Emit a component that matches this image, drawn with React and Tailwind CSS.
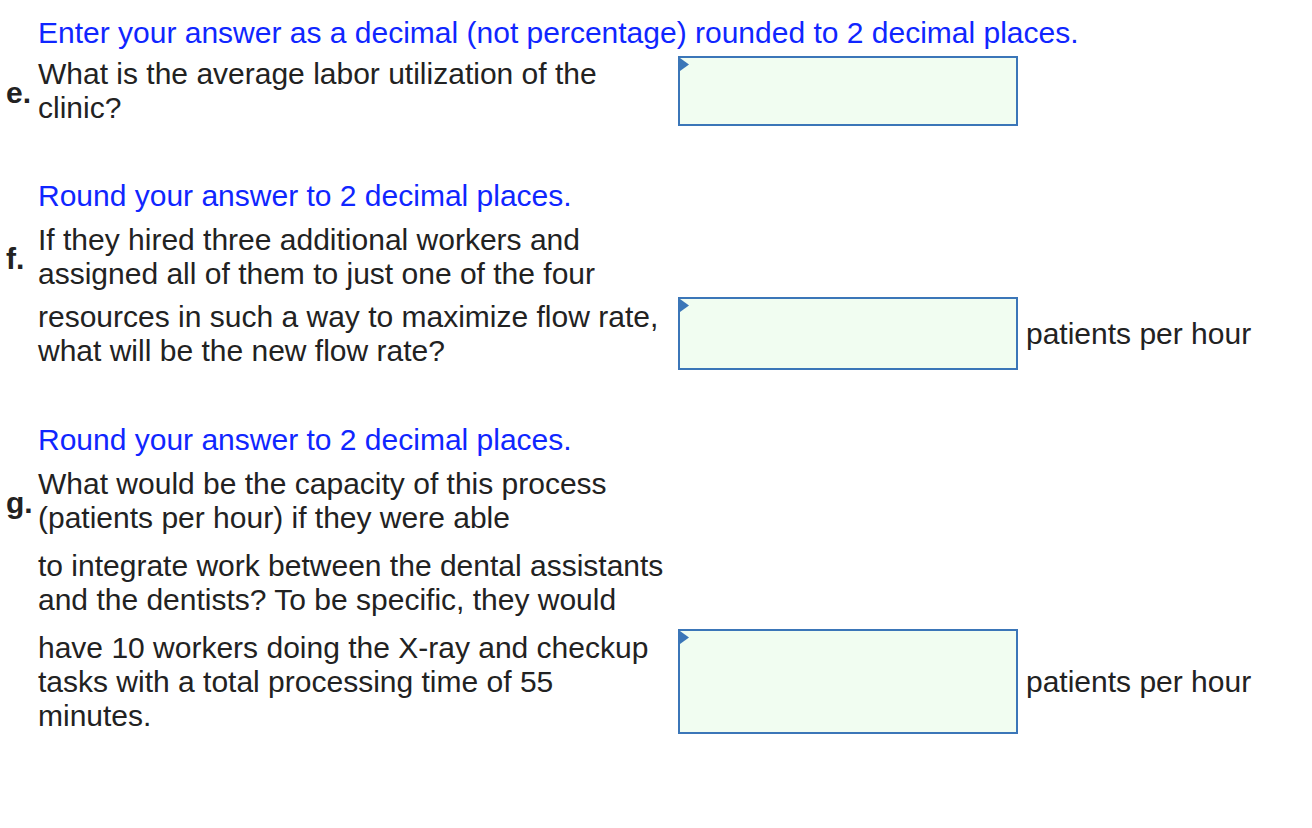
import React from "react";

const AnswerBox = ({ height }) => (
  <div
    className="relative w-[340px] shrink-0 border-2 border-[#3b76b8] bg-[#f1fdf1]"
    style={{ height }}
  >
    <svg className="absolute left-0 top-0" width="10" height="14" viewBox="0 0 10 14">
      <polygon points="0,0 9,6.5 0,13" fill="#3b76b8" />
    </svg>
  </div>
);

const Label = ({ children }) => (
  <div className="w-[38px] shrink-0 pl-[6px] pt-[4px] font-bold">{children}</div>
);

const Lines = ({ lines }) => (
  <div className="w-[640px] shrink-0 whitespace-nowrap">
    {lines.map((l, i) => (
      <div key={i}>{l}</div>
    ))}
  </div>
);

const Hint = ({ children, className = "" }) => (
  <div className={`pl-[38px] text-[#1026ff] ${className}`}>{children}</div>
);

const Unit = () => <div className="ml-[8px] whitespace-nowrap">patients per hour</div>;

export default function App() {
  return (
    <div className="min-h-screen bg-white pt-[16px] font-['Liberation_Sans',Arial,sans-serif] text-[30px] leading-[34px] text-[#222]">
      <Hint>Enter your answer as a decimal (not percentage) rounded to 2 decimal places.</Hint>
      <div className="mt-[6px] flex items-center">
        <Label>e.</Label>
        <Lines lines={["What is the average labor utilization of the", "clinic?"]} />
        <AnswerBox height={70} />
      </div>

      <Hint className="mt-[53px]">Round your answer to 2 decimal places.</Hint>
      <div className="mt-[10px] flex items-center">
        <Label>f.</Label>
        <Lines lines={["If they hired three additional workers and", "assigned all of them to just one of the four"]} />
      </div>
      <div className="mt-[6px] flex items-center">
        <Label />
        <Lines lines={["resources in such a way to maximize flow rate,", "what will be the new flow rate?"]} />
        <AnswerBox height={73} />
        <Unit />
      </div>

      <Hint className="mt-[53px]">Round your answer to 2 decimal places.</Hint>
      <div className="mt-[10px] flex items-center">
        <Label>g.</Label>
        <Lines lines={["What would be the capacity of this process", "(patients per hour) if they were able"]} />
      </div>
      <div className="mt-[14px] flex items-center">
        <Label />
        <Lines lines={["to integrate work between the dental assistants", "and the dentists? To be specific, they would"]} />
      </div>
      <div className="mt-[12px] flex items-center">
        <Label />
        <Lines
          lines={[
            "have 10 workers doing the X-ray and checkup",
            "tasks with a total processing time of 55",
            "minutes.",
          ]}
        />
        <AnswerBox height={105} />
        <Unit />
      </div>
    </div>
  );
}
